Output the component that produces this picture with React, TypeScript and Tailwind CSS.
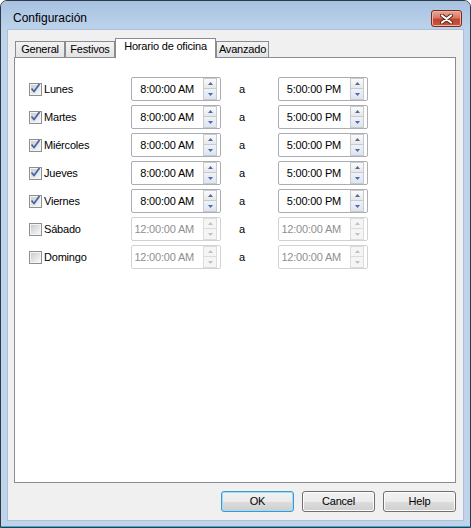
import React from "react";

const days: { name: string; on: boolean }[] = [
  { name: "Lunes", on: true },
  { name: "Martes", on: true },
  { name: "Miércoles", on: true },
  { name: "Jueves", on: true },
  { name: "Viernes", on: true },
  { name: "Sábado", on: false },
  { name: "Domingo", on: false },
];

function Check({ checked }: { checked: boolean }) {
  return (
    <div className="flex h-[13px] w-[13px] shrink-0 items-center justify-center border border-[#8e8f8f] bg-[#f4f4f4]">
      <div className="relative h-[9px] w-[9px] bg-[linear-gradient(135deg,#c9ccd1_0%,#e3e4e6_55%,#f7f7f7_100%)]">
        {checked && (
          <svg className="absolute left-[-1px] top-[-2px]" width="11" height="11" viewBox="0 0 11 11">
            <path d="M1.5 5.5 L4 8.5 L9.5 1" fill="none" stroke="#4a64a0" strokeWidth="1.8" strokeLinejoin="round" />
          </svg>
        )}
      </div>
    </div>
  );
}

function Arrow({ up, disabled }: { up: boolean; disabled: boolean }) {
  const color = disabled ? "#c2c2c2" : "#4d6aa6";
  return (
    <svg width="5" height="3" viewBox="0 0 5 3">
      {up ? <path d="M0 3 L2.5 0 L5 3 Z" fill={color} /> : <path d="M0 0 L2.5 3 L5 0 Z" fill={color} />}
    </svg>
  );
}

function Spin({ value, disabled }: { value: string; disabled: boolean }) {
  return (
    <div
      className={`flex h-[24px] w-[90px] items-center rounded-[2px] border bg-white ${
        disabled ? "border-[#d0d2d6] text-[#8f8f8f]" : "border-[#abadb3] text-black"
      }`}
    >
      <span className="flex-1 pr-[9px] text-right">{value}</span>
      <div className="mr-[3px] flex h-[22px] w-[14px] flex-col">
        <div
          className={`flex h-[11px] items-center justify-center border ${
            disabled
              ? "border-[#dcdcdc] bg-[#f5f5f5]"
              : "border-[#c8cacd] bg-linear-to-b from-[#fbfbfb] to-[#e8e8e8]"
          }`}
        >
          <Arrow up disabled={disabled} />
        </div>
        <div
          className={`flex h-[11px] items-center justify-center border border-t-0 ${
            disabled
              ? "border-[#dcdcdc] bg-[#f5f5f5]"
              : "border-[#c8cacd] bg-linear-to-b from-[#eef2f8] to-[#dde5f1]"
          }`}
        >
          <Arrow up={false} disabled={disabled} />
        </div>
      </div>
    </div>
  );
}

function Tab({ label, w, selected }: { label: string; w: string; selected?: boolean }) {
  if (selected) {
    return (
      <div
        className={`relative z-10 mb-[-1px] flex h-[20px] ${w} items-start justify-center border border-b-0 border-[#898c95] bg-white pt-[1px]`}
      >
        {label}
      </div>
    );
  }
  return (
    <div
      className={`flex h-[16px] ${w} items-center justify-center border border-b-0 border-[#898c95] bg-linear-to-b from-[#f3f3f3] to-[#e3e3e3]`}
    >
      {label}
    </div>
  );
}

function Btn({ label, focus }: { label: string; focus?: boolean }) {
  return (
    <div
      className={`flex h-[21px] w-[73px] items-center justify-center rounded-[3px] border bg-[linear-gradient(to_bottom,#f2f2f2_0%,#ebebeb_50%,#dddddd_51%,#cfcfcf_100%)] ${
        focus ? "border-[#3c9ad0] shadow-[inset_0_0_0_1px_#9fdcf6]" : "border-[#707070] shadow-[inset_0_0_0_1px_#fbfbfb]"
      }`}
    >
      {label}
    </div>
  );
}

export default function App() {
  return (
    <div className="h-[528px] w-[471px] font-['Liberation_Sans',Arial,sans-serif] text-[11px] leading-[13px] tracking-[-0.2px] text-black">
      <div className="flex h-[528px] w-[471px] flex-col overflow-hidden rounded-t-[7px] border border-[#2f3a46] bg-[#bfd4eb]">
        {/* title bar */}
        <div className="flex h-[28px] shrink-0 items-start justify-between bg-linear-to-b from-[#a7c2e1] to-[#bdd3eb]">
          <div className="ml-[12px] mt-[10px] text-[12px] leading-[15px] tracking-normal">Configuración</div>
          <div className="mr-[8px] mt-[9px] flex h-[17px] w-[31px] items-center justify-center rounded-[3px] border border-[#7b2a1d] bg-[linear-gradient(to_bottom,#e8a797_0%,#d77a66_45%,#c2452f_55%,#c8553b_100%)] shadow-[inset_0_0_0_1px_#eeb3a5]">
            <svg width="13" height="10" viewBox="0 0 13 10">
              <path d="M2 1.5 L11 8.5 M11 1.5 L2 8.5" stroke="#5b2419" strokeWidth="4" strokeLinecap="round" />
              <path d="M2 1.5 L11 8.5 M11 1.5 L2 8.5" stroke="#ffffff" strokeWidth="2.2" strokeLinecap="round" />
            </svg>
          </div>
        </div>

        {/* content */}
        <div className="mx-[6px] flex h-[492px] shrink-0 flex-col border border-[#a9c0da] bg-[#f0f0f0] pt-[8px]">
          <div className="ml-[7px] flex h-[19px] items-end">
            <Tab label="General" w="w-[50px]" />
            <Tab label="Festivos" w="w-[50px]" />
            <Tab label="Horario de oficina" w="w-[101px]" selected />
            <Tab label="Avanzado" w="w-[53px]" />
          </div>
          <div className="ml-[6px] h-[426px] w-[442px] border border-[#898c95] bg-white pl-[14px] pt-[19px]">
            <div className="flex flex-col gap-[4px]">
              {days.map((d) => (
                <div key={d.name} className="grid h-[24px] grid-cols-[102px_90px_57px_90px] items-center">
                  <div className="flex items-center gap-[2px]">
                    <Check checked={d.on} />
                    <span>{d.name}</span>
                  </div>
                  <Spin value={d.on ? "8:00:00 AM" : "12:00:00 AM"} disabled={!d.on} />
                  <span className="pl-[18px]">a</span>
                  <Spin value={d.on ? "5:00:00 PM" : "12:00:00 AM"} disabled={!d.on} />
                </div>
              ))}
            </div>
          </div>
          <div className="mr-[7px] mt-[8px] flex justify-end gap-[8px]">
            <Btn label="OK" focus />
            <Btn label="Cancel" />
            <Btn label="Help" />
          </div>
        </div>
        <div className="h-[5px] shrink-0" />
        <div className="h-px shrink-0 bg-[#2bb3de]" />
      </div>
    </div>
  );
}
